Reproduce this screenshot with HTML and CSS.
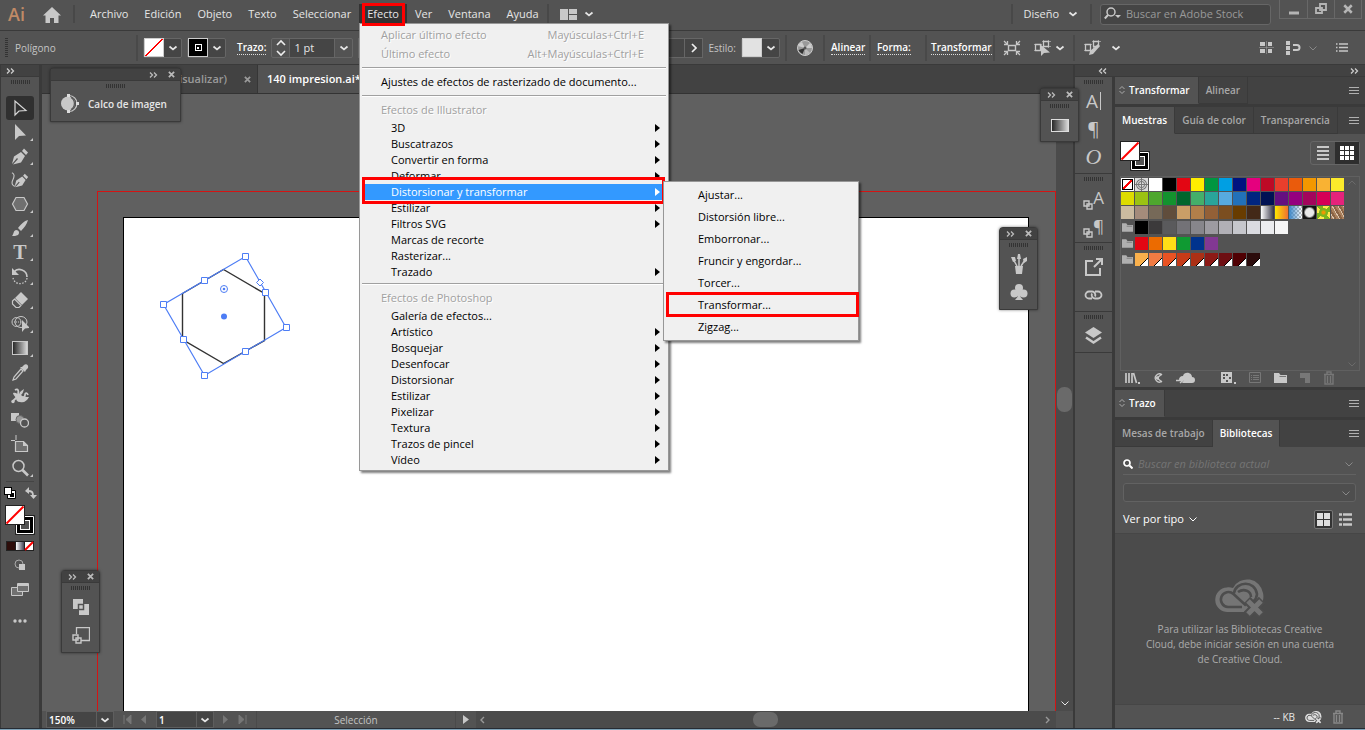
FILE: index.html
```html
<!DOCTYPE html>
<html lang="es">

<head>
  <meta charset="UTF-8" />
  <meta name="viewport" content="width=device-width, initial-scale=1.0" />
  <title>140 impresion.ai</title>
  <link rel="stylesheet" href="styles.css">
</head>

<body>
  <!-- shared icons -->
  <svg class="defs" width="0" height="0" aria-hidden="true">
    <linearGradient id="g-bw"><stop offset="0" stop-color="#222" /><stop offset="1" stop-color="#ddd" /></linearGradient>
    <linearGradient id="g-wb"><stop offset="0" stop-color="#fff" /><stop offset="1" stop-color="#445" /></linearGradient>
    <symbol id="chev" viewBox="0 0 10 10"><path d="M1.500 3.500 5 6.500 8.500 3.500" fill="none" stroke="currentColor" stroke-width="1.700" /></symbol>
    <symbol id="thin" viewBox="0 0 10 10"><path d="M1.500 3.500 5 7 8.500 3.500" fill="none" stroke="currentColor" /></symbol>
    <symbol id="dbl" viewBox="0 0 10 8"><path d="M1 1.500 3.500 4 1 6.500M5 1.500 7.500 4 5 6.500" fill="none" stroke="currentColor" stroke-width="1.300" /></symbol>
    <symbol id="x" viewBox="0 0 8 8"><path d="M1 1 7 7M7 1 1 7" fill="none" stroke="currentColor" stroke-width="2" /></symbol>
    <symbol id="burger" viewBox="0 0 10 9"><path d="M0 1.500h10M0 4.500h10M0 7.500h10" stroke="currentColor" /></symbol>
    <symbol id="updown" viewBox="0 0 6 10"><path d="M.5 4 3 1.500 5.500 4M.5 6 3 8.500 5.500 6" fill="none" stroke="currentColor" /></symbol>
    <symbol id="proxy" viewBox="0 0 30 30">
      <path d="M10.500 10.500h19v19h-19z" fill="#000" stroke="#222" />
      <path d="M11.500 11.500h17v17h-17z" fill="none" stroke="#fff" />
      <rect x="15.500" y="15.500" width="9" height="9" fill="#535353" stroke="#fff" />
      <rect x=".5" y=".5" width="19" height="19" fill="#fff" stroke="#222" />
      <path d="M1.500 18.500 18.500 1.500" stroke="#f00" stroke-width="2" />
    </symbol>
    <symbol id="pen" viewBox="0 0 18 18">
      <path d="M1 17 3 9.500 10 5l4 4-4 6.500-8 2 5-5.500-1-1z" fill="#c8c8c8" /><path d="M11 4 13 1.500l4 4L15 8z" fill="#c8c8c8" />
    </symbol>
    <symbol id="cc" viewBox="0 0 50 40">
      <path d="M13 35A12 12 0 0 1 12 10.500c2-.5 4 0 6 .5A16 16 0 0 1 48 16c1 4 0 8-1 11L33 35z" fill="currentColor" />
      <path d="M27 30H13A7.500 7.500 0 1 1 18.500 17L31 28.500M19 16C21 4 40 3 42 17c0 4-2 6-4 8M23 15c6-4 13-1 13 5" fill="none" stroke="#4d4d4d" stroke-width="2.600" />
      <path d="M32 23 47 38M47 23 32 38" stroke="#4d4d4d" stroke-width="9" />
      <path d="M33 24 46 37M46 24 33 37" stroke="currentColor" stroke-width="5" />
    </symbol>
    <symbol id="trash" viewBox="0 0 12 14"><path d="M1 3.500h10M4 3V1h4v2M2 4v9h8V4M4.500 5v7M7.500 5v7" fill="none" stroke="currentColor" stroke-width="1.400" /></symbol>
    <symbol id="folder" viewBox="0 0 13 10"><path d="M0 0h5l1.500 2H13v8H0z" fill="currentColor" /><path d="M5.500 3.500H12" stroke="#777" /></symbol>
  </svg>

  <header class="menubar">
    <span class="logo">Ai</span>
    <button class="home" aria-label="Inicio"><svg width="18" height="16" viewBox="0 0 18 16"><path d="M9 0 18 8.500H15.500V16H11V11H7v5H2.500V8.500H0z" fill="#c8c8c8" /></svg></button>
    <nav class="menus">
      <button>Archivo</button>
      <button>Edición</button>
      <button>Objeto</button>
      <button>Texto</button>
      <button>Seleccionar</button>
      <button class="open marked">Efecto</button>
      <button>Ver</button>
      <button>Ventana</button>
      <button>Ayuda</button>
    </nav>
    <button class="arrange" aria-label="Organizar documentos">
      <svg width="17" height="11" viewBox="0 0 17 11"><path d="M0 0h8v11H0zM9 0h8v5H9zM9 6h8v5H9z" fill="#c8c8c8" /></svg>
      <svg width="10" height="10"><use href="#chev" /></svg>
    </button>
    <button class="workspace">Diseño <svg width="10" height="10"><use href="#chev" /></svg></button>
    <label class="stock">
      <svg width="18" height="14" viewBox="0 0 18 14"><circle cx="7" cy="5" r="4" fill="none" stroke="#c8c8c8" stroke-width="1.500" /><path d="M4 8 .8 11.500" stroke="#c8c8c8" stroke-width="2" /><path d="M11 8h6l-3 3z" fill="#c8c8c8" /></svg>
      <input type="text" placeholder="Buscar en Adobe Stock" aria-label="Buscar en Adobe Stock">
    </label>
    <div class="window-btns">
      <button aria-label="Minimizar"><svg width="12" height="12"><path d="M1 10h10" stroke="#b5b5b5" stroke-width="3" /></svg></button>
      <button aria-label="Restaurar"><svg width="12" height="12"><path d="M5 1h6v6H5zM1 5h6v5H1z" fill="none" stroke="#b5b5b5" stroke-width="1.800" /></svg></button>
      <button aria-label="Cerrar"><svg width="10" height="10" color="#b5b5b5"><use href="#x" /></svg></button>
    </div>
  </header>

  <section class="control">
    <div class="seg seg-name"><i class="grip-v"></i><span>Polígono</span></div>
    <div class="seg seg-main">
      <button class="combo" aria-label="Relleno"><span class="chip none"></span><svg width="10" height="10"><use href="#chev" /></svg></button>
      <button class="combo" aria-label="Trazo"><span class="chip stroke"></span><svg width="10" height="10"><use href="#chev" /></svg></button>
      <label class="link" for="weight">Trazo:</label>
      <span class="stepper">
        <button aria-label="Cambiar grosor"><svg width="10" height="18" viewBox="0 0 10 18"><path d="M1 6 5 2l4 4M1 12l4 4 4-4" fill="none" stroke="#eee" stroke-width="1.600" /></svg></button>
        <input id="weight" type="text" value="1 pt">
        <button aria-label="Grosores"><svg width="10" height="10"><use href="#chev" /></svg></button>
      </span>
      <span class="profile"><button aria-label="Opacidad"><svg width="6" height="10"><path d="M1 1 5 5 1 9" fill="none" stroke="#eee" stroke-width="1.700" /></svg></button></span>
      <span class="dim">Estilo:</span>
      <button class="combo" aria-label="Estilo"><span class="chip plain"></span><svg width="10" height="10"><use href="#chev" /></svg></button>
    </div>
    <div class="seg seg-wheel">
      <svg width="16" height="16" viewBox="0 0 16 16"><circle cx="8" cy="8" r="7.500" fill="#9a9a9a" stroke="#ccc" /><path d="M8 8 1 6a7 7 0 0 1 4-4zM8 8l5-5a7 7 0 0 1 2 5z" fill="#ccc" /><path d="M8 8 1.500 10a7 7 0 0 0 4 4z" fill="#333" /><path d="M8 8 8 15a7 7 0 0 0 5-2z" fill="#bbb" /><circle cx="8" cy="8" r="1.500" fill="#555" /></svg>
    </div>
    <div class="seg seg-align"><a class="link" href="#">Alinear</a></div>
    <div class="seg seg-shape"><a class="link" href="#">Forma:</a></div>
    <div class="seg seg-transf"><a class="link" href="#">Transformar</a></div>
    <div class="seg seg-icons">
      <svg width="18" height="16" viewBox="0 0 18 16"><path d="M5.500 5.500h7v5h-7z" fill="none" stroke="#c8c8c8" stroke-width="1.400" /><path d="M1 1 4 4M17 1 14 4M1 15 4 12M17 15 14 12" stroke="#c8c8c8" stroke-width="1.300" /><path d="M4.500 1v3.500H1M13.500 1v3.500H17M4.500 15v-3.500H1M13.500 15v-3.500H17" fill="none" stroke="#c8c8c8" stroke-width="1.300" /></svg>
      <span class="pair">
        <svg width="17" height="16" viewBox="0 0 17 16"><path d="M1.500 4.500h5v6h-5zM9.500 1.500h5v5h-5z" fill="none" stroke="#c8c8c8" stroke-width="1.300" /><path d="M0 4.500h8M0 10.500h7M8 1.500h9M8 6.500h9M9.500 0v8M14.500 0v8" stroke="#c8c8c8" stroke-width=".6" /><path d="M7 5v11l3-3 6-.5z" fill="#c8c8c8" /></svg>
        <svg width="10" height="10"><use href="#chev" /></svg>
      </span>
    </div>
    <div class="seg seg-edit">
      <svg width="17" height="16" viewBox="0 0 17 16"><path d="M1.500 4.500h5v6h-5zM9.500 1.500h5v5h-5z" fill="none" stroke="#c8c8c8" stroke-width="1.300" /><path d="M0 4.500h8M0 10.500h7M8 1.500h9M9.500 0v8M14.500 0v4" stroke="#c8c8c8" stroke-width=".6" /><path d="m5 15 1-4 8-7 2 2-7 8z" fill="#c8c8c8" /></svg>
      <svg width="10" height="10"><use href="#chev" /></svg>
    </div>
    <div class="control-end">
      <svg width="15" height="13" viewBox="0 0 15 13"><path d="M1 1h5v4H1zM9 1h4v4H9zM1 8h5v4H1zM9 8h4v4H9z" fill="#c8c8c8" /><path d="M0 6.500h15M7.500 0v13" stroke="#999" stroke-width=".6" /></svg>
      <span class="pair">
        <svg width="15" height="14" viewBox="0 0 15 14"><path d="M0 0h4v4H0zM0 5h4v4H0zM0 10h4v4H0z" fill="#c8c8c8" /><path d="M7 4h4a2.500 2.500 0 0 1 0 5H7" fill="none" stroke="#c8c8c8" stroke-width="2" /></svg>
        <svg class="faint" width="10" height="10"><use href="#thin" /></svg>
      </span>
      <svg width="12" height="9" viewBox="0 0 12 9"><path d="M3 1h9M3 4.500h9M3 8h9M0 1h1.500M0 4.500h1.500M0 8h1.500" stroke="#c8c8c8" stroke-width="1.300" /></svg>
    </div>
  </section>

  <main>
    <aside class="tools">
      <div class="dock-head"><svg width="10" height="8"><use href="#dbl" /></svg></div>
      <i class="grip"></i>
      <ul class="tool-list">
        <li class="active"><svg viewBox="0 0 18 18"><path d="M4 2v14l4-4 7-.5z" fill="none" stroke="#d8d8d8" stroke-width="1.200" /></svg></li>
        <li class="more"><svg viewBox="0 0 18 18"><path d="M4 1v16l4-4 7-.5z" fill="#c8c8c8" /></svg></li>
        <li class="more"><svg viewBox="0 0 18 18"><use href="#pen" /></svg></li>
        <li><svg viewBox="0 0 20 18"><use href="#pen" x="3" width="17" height="18" /><path d="M1 1c3 1 3 4 1 8s0 7 3 7" fill="none" stroke="#c8c8c8" stroke-width="1.200" /></svg></li>
        <li class="more"><svg viewBox="0 0 18 18"><path d="M1.500 9 5 2.500h8L16.500 9 13 15.500H5z" fill="#707070" stroke="#c8c8c8" stroke-width="1.200" /></svg></li>
        <li class="more"><svg viewBox="0 0 18 18"><path d="M1 17c2-2 1-5 4-6 3 0 4 3 2 5-2 1-4 1-6 1zM7 9c3-4 6-7 10-8-1 4-4 8-7 11z" fill="#c8c8c8" /></svg></li>
        <li class="more"><span class="type">T</span></li>
        <li class="more"><svg viewBox="0 0 18 18"><path d="M3 5c4-5 13-2 13 5" fill="none" stroke="#c8c8c8" stroke-width="1.700" /><path d="M1 1v7h7z" fill="#c8c8c8" /><path d="M16 11c-1 7-12 8-14 0" fill="none" stroke="#c8c8c8" stroke-width="1.300" stroke-dasharray="1.500 1.500" /></svg></li>
        <li class="more"><svg viewBox="0 0 18 18"><path d="M10 1 17 8 11 14 4 7z" fill="#c8c8c8" /><path d="M3.500 8 10 14.500 8 16.500H5L1.500 13v-3z" fill="none" stroke="#c8c8c8" stroke-width="1.200" /></svg></li>
        <li class="more"><svg viewBox="0 0 18 18"><circle cx="5.500" cy="7" r="4.500" fill="none" stroke="#c8c8c8" /><ellipse cx="10" cy="7" rx="6" ry="5.500" fill="none" stroke="#c8c8c8" /><path d="M3 7h8" stroke="#c8c8c8" stroke-dasharray="1 1" /><path d="M11 5v12l3-3.500 5-.5z" fill="#c8c8c8" /></svg></li>
        <li class="more"><svg viewBox="0 0 18 18"><rect x="1.500" y="2.500" width="15" height="13" fill="url(#g-bw)" stroke="#c8c8c8" /></svg></li>
        <li><svg viewBox="0 0 18 18"><path d="m10 6 2 2-7 8-3 1 1-3z" fill="none" stroke="#c8c8c8" stroke-width="1.200" /><path d="M9 4 14 9l1-2 2-2c1-3-2-5-4-3l-2 2z" fill="#c8c8c8" /></svg></li>
        <li><svg viewBox="0 0 18 18"><path d="M1.500 14.500 6 10M4 3c3-2 4 1 3 4M17 8c-1-3-3-2-3 0s-2 3-3 2" fill="none" stroke="#c8c8c8" stroke-width="1.800" /><path d="M2 6c3-1 4 1 6 1 1-3 4-4 5-5-1 3-1 4-3 6 2 2 5 2 8 2-2 4-5 6-9 5-3 0-4-2-4-4-1-2-3-3-3-5z" fill="#c8c8c8" /><circle cx="2" cy="14.500" r="1.700" fill="#c8c8c8" /></svg></li>
        <li><svg viewBox="0 0 18 18"><path d="M0 2h8v8H0z" fill="#c8c8c8" /><circle cx="9" cy="8.500" r="4" fill="#999" stroke="#666" /><circle cx="13.500" cy="12" r="4" fill="#535353" stroke="#c8c8c8" stroke-width="1.300" /></svg></li>
        <li><svg viewBox="0 0 18 18"><path d="M4.500 6.500h8l4 4v6h-12z" fill="#707070" stroke="#c8c8c8" stroke-width="1.200" /><path d="M5 0v5M0 5.500h4" stroke="#c8c8c8" /><path d="M12 6v5h5z" fill="#c8c8c8" /></svg></li>
        <li class="more"><svg viewBox="0 0 18 18"><circle cx="7.500" cy="7" r="5.500" fill="none" stroke="#c8c8c8" stroke-width="1.500" /><path d="m11.500 11 5.500 5.500" stroke="#c8c8c8" stroke-width="2.600" /></svg></li>
      </ul>
      <div class="swap">
        <svg width="12" height="12" viewBox="0 0 12 12"><path d="M3.500 3.500h8v8h-8z" fill="#fff" stroke="#000" /><path d="M6 6h4v4H6z" fill="#000" /><rect x=".5" y=".5" width="7" height="7" fill="#fff" stroke="#000" /></svg>
        <svg width="12" height="12" viewBox="0 0 12 12"><path d="M3 4c4 0 5 1 5 5" fill="none" stroke="#c8c8c8" stroke-width="1.800" /><path d="M0 4 4 0v7zM5 8h7l-3.500 4z" fill="#c8c8c8" /></svg>
      </div>
      <svg class="fillstroke" width="30" height="30"><use href="#proxy" /></svg>
      <svg class="modes" width="28" height="10" viewBox="0 0 28 10"><path d="M0 0h28v10H0z" fill="#222" /><path d="M1 1h8v8H1z" fill="#2d0d0a" /><path d="M10 1h8v8h-8z" fill="url(#g-wb)" /><path d="M19 1h8v8h-8z" fill="#fff" /><path d="m19 9 8-8" stroke="#f00" stroke-width="2" /></svg>
      <svg class="drawmode" width="12" height="12" viewBox="0 0 12 12"><circle cx="5" cy="5" r="4" fill="none" stroke="#aaa" /><path d="M5 5h6v6H5z" fill="#c8c8c8" /></svg>
      <svg class="screenmode" width="18" height="13" viewBox="0 0 18 13"><path d="M.5 4.500h11v8H.5z" fill="#707070" stroke="#c8c8c8" /><path d="M6.500.5h11v8h-11z" fill="#707070" stroke="#c8c8c8" /><path d="M6 1h12v2H6z" fill="#c8c8c8" /></svg>
      <svg class="dots" width="14" height="4" fill="#c8c8c8"><circle cx="2" cy="2" r="1.700" /><circle cx="7" cy="2" r="1.700" /><circle cx="12" cy="2" r="1.700" /></svg>
    </aside>

    <section class="doc">
      <div class="tabs">
        <div class="tab tab-back"><span>Previsualizar)</span><svg width="7" height="7"><use href="#x" width="7" height="7" /></svg></div>
        <div class="tab active">140 impresion.ai*</div>
      </div>
      <div class="workarea">
        <div class="canvas">
          <div class="bleed"></div>
          <div class="artboard">
            <svg class="shape" width="130" height="126" viewBox="0 0 130 126">
              <path d="M22.500 37.500 63.500 13.500 104.500 37.500V84.500L63.500 107.500 22.500 83.500z" fill="#fff" stroke="#333" stroke-width="1.400" />
              <path d="M85.500.5 126 71.500 44.500 119.500 3.500 48.500z" fill="none" stroke="#4d7df5" stroke-width="1.200" />
              <g fill="#fff" stroke="#4d7df5"><path d="M82.500-2.500h6v6h-6zM123.500 68.500h6v6h-6zM41.500 116.500h6v6h-6zM.5 45.500h6v6h-6zM41.500 21.500h6v6h-6zM102.500 33.500h6v6h-6zM82.500 92.500h6v6h-6zM20.500 80.500h6v6h-6z" /><circle cx="64" cy="33" r="3.500" /><path d="m100 23 3.500 3.500-3.500 3.500-3.500-3.500z" /></g>
              <circle cx="64" cy="33" r="1.300" fill="#4d7df5" /><circle cx="64" cy="60.500" r="3" fill="#4d7df5" />
            </svg>
          </div>
        </div>
        <div class="vscroll"><i></i><svg width="10" height="10"><use href="#thin" /></svg></div>
      </div>
      <footer class="status">
        <span class="zoombox"><input type="text" value="150%" aria-label="Zoom"><button aria-label="Niveles de zoom"><svg width="10" height="10"><use href="#chev" /></svg></button></span>
        <span class="nav"><svg width="9" height="9"><path d="M1 0v9M8 0v9L3 4.500z" fill="#777" stroke="#777" /></svg><svg width="6" height="9"><path d="M5 0v9L0 4.500z" fill="#777" /></svg></span>
        <span class="zoombox page"><input type="text" value="1" aria-label="Mesa de trabajo"><button aria-label="Mesas"><svg width="10" height="10"><use href="#chev" /></svg></button></span>
        <span class="nav"><svg width="6" height="9"><path d="M0 0v9L5 4.500z" fill="#777" /></svg><svg width="9" height="9"><path d="M8 0v9M1 0v9l5-4.500z" fill="#777" stroke="#777" /></svg></span>
        <span class="mode">Selección</span>
        <svg class="play" width="6" height="9"><path d="M0 0v9L6 4.500z" fill="#c8c8c8" /></svg>
        <div class="hscroll"><svg width="5" height="8"><path d="M4 1 1 4l3 3" fill="none" stroke="#999" stroke-width="1.400" /></svg><i></i><svg width="5" height="8"><path d="M1 1 4 4 1 7" fill="none" stroke="#999" stroke-width="1.400" /></svg></div>
      </footer>
    </section>

    <div class="dock">
      <div class="dock-head wide"><svg class="flip" width="10" height="8"><use href="#dbl" /></svg><svg width="10" height="8"><use href="#dbl" /></svg></div>
      <div class="dock-cols">
        <aside class="icons">
          <div class="group"><i class="grip"></i><span class="cell glyph">A<i class="caret"></i></span><span class="cell glyph">¶</span><span class="cell glyph oh">O</span></div>
          <div class="group"><i class="grip"></i>
            <span class="cell glyph style"><svg width="10" height="10"><path d="M1 1h5v5H1zM4 4h5v5H4z" fill="none" stroke="#c8c8c8" stroke-width="1.400" /></svg>A</span>
            <span class="cell glyph style"><svg width="10" height="10"><path d="M1 1h5v5H1zM4 4h5v5H4z" fill="none" stroke="#c8c8c8" stroke-width="1.400" /></svg>¶</span>
          </div>
          <div class="group"><i class="grip"></i>
            <span class="cell"><svg width="18" height="18" viewBox="0 0 18 18"><path d="M8 3H1v14h14v-7" fill="none" stroke="#c8c8c8" stroke-width="2" /><path d="M9 9 16 2M11 1h6v6" fill="none" stroke="#c8c8c8" stroke-width="2" /></svg></span>
            <span class="cell"><svg width="19" height="10" viewBox="0 0 19 10"><path d="M8 8.500H5a3.500 3.500 0 0 1 0-7h3a3.500 3.500 0 0 1 3 5M11 1.500h3a3.500 3.500 0 0 1 0 7h-3a3.500 3.500 0 0 1-3-5" fill="none" stroke="#c8c8c8" stroke-width="1.800" /></svg></span>
          </div>
          <div class="group"><i class="grip"></i><span class="cell"><svg width="17" height="18" viewBox="0 0 17 18"><path d="M8.500 0 17 5.500 8.500 11 0 5.500z" fill="#c8c8c8" /><path d="m1 10.500 7.500 5 7.500-5" fill="none" stroke="#c8c8c8" stroke-width="2.500" /></svg></span></div>
        </aside>

        <aside class="panels">
          <section class="panel">
            <div class="ptabs">
              <button class="active"><svg width="6" height="10"><use href="#updown" /></svg>Transformar</button><button>Alinear</button>
              <svg class="menu-ico" width="10" height="9"><use href="#burger" /></svg>
            </div>
          </section>
          <section class="panel">
            <div class="ptabs tight">
              <button class="active">Muestras</button><button>Guía de color</button><button>Transparencia</button>
              <svg class="menu-ico" width="10" height="9"><use href="#burger" /></svg>
            </div>
            <div class="swatches-body">
              <div class="swatches-top">
                <svg width="30" height="30"><use href="#proxy" /></svg>
                <span class="toggle">
                  <button aria-label="Lista"><svg width="12" height="14"><path d="M0 1h12M0 5h12M0 9h12M0 13h12" stroke="#c8c8c8" stroke-width="2" /></svg></button>
                  <button class="on" aria-label="Miniaturas"><svg width="14" height="14" fill="#fff"><path d="M0 0h4v4H0zM5 0h4v4H5zM10 0h4v4h-4zM0 5h4v4H0zM5 5h4v4H5zM10 5h4v4h-4zM0 10h4v4H0zM5 10h4v4H5zM10 10h4v4h-4z" /></svg></button>
                </span>
              </div>
              <div class="swatches-box">
                <div id="swatches"></div>
                <div class="swatches-scroll"><svg class="up" width="10" height="10"><use href="#thin" /></svg><svg width="10" height="10"><use href="#thin" /></svg></div>
              </div>
              <div class="swatches-tools">
                <svg width="15" height="12" viewBox="0 0 15 12"><path d="M1 1v10M4 1v10M7 1v10M8.500 1l3 10" stroke="#c8c8c8" stroke-width="1.700" /><path d="M13 10h2v2h-2z" fill="#c8c8c8" /></svg>
                <svg width="10" height="12" viewBox="0 0 10 12"><path d="M9 3A4 4 0 1 0 9 9M4 6l5-4M4 6l5 4" fill="none" stroke="#c8c8c8" stroke-width="1.300" /><circle cx="4.500" cy="6" r="1.700" fill="#c8c8c8" /></svg>
                <svg width="19" height="12" viewBox="0 0 19 12"><path d="M6 11h10a3 3 0 0 0 0-6c0-5-8-6-9-1-3 0-4 2-4 4h5z" fill="#c8c8c8" /><path d="M0 8.500h6M4 6l3 2.500L4 11" fill="none" stroke="#c8c8c8" stroke-width="1.500" /></svg>
                <svg class="gap" width="15" height="12" viewBox="0 0 15 12"><path d="M0 0h11v11H0z" fill="#c8c8c8" /><path d="M2 2h2v2H2zM5 2h2v2H5zM2 5h2v2H2zM8 5h2v2H8zM5 8h2v2H5z" fill="#535353" /><path d="M13 10h2v2h-2z" fill="#c8c8c8" /></svg>
                <svg width="12" height="12" viewBox="0 0 12 12"><path d="M.5.5h11v10H.5zM2 3.500h1M4 3.500h6M2 5.500h1M4 5.500h6M2 7.500h1M4 7.500h6" fill="none" stroke="#777" /></svg>
                <svg width="13" height="10" color="#c8c8c8"><use href="#folder" /></svg>
                <svg width="10" height="10"><path d="M0 0h10v10H5V5H0z" fill="#777" /></svg>
                <svg width="12" height="14" color="#777"><use href="#trash" /></svg>
              </div>
            </div>
          </section>
          <section class="panel">
            <div class="ptabs">
              <button class="active"><svg width="6" height="10"><use href="#updown" /></svg>Trazo</button>
              <svg class="menu-ico" width="10" height="9"><use href="#burger" /></svg>
            </div>
          </section>
          <section class="panel grow">
            <div class="ptabs tight">
              <button>Mesas de trabajo</button><button class="active">Bibliotecas</button>
              <svg class="menu-ico" width="10" height="9"><use href="#burger" /></svg>
            </div>
            <div class="lib-top">
              <label class="lib-search">
                <svg width="10" height="10"><circle cx="4" cy="4" r="3" fill="none" stroke="#fff" stroke-width="1.700" /><path d="m6.500 6.500 3 3" stroke="#fff" stroke-width="2" /></svg>
                <input type="text" placeholder="Buscar en biblioteca actual" aria-label="Buscar en biblioteca actual">
                <svg class="faint" width="10" height="10"><use href="#thin" /></svg>
              </label>
              <div class="lib-select"><select aria-label="Biblioteca"><option></option></select><svg class="faint" width="10" height="10"><use href="#thin" /></svg></div>
              <div class="lib-view">
                <button class="by-type">Ver por tipo <svg width="10" height="10"><use href="#thin" /></svg></button>
                <button class="grid-btn" aria-label="Cuadrícula"><svg width="13" height="13" fill="#ddd"><path d="M0 0h6v6H0zM7 0h6v6H7zM0 7h6v6H0zM7 7h6v6H7z" /></svg></button>
                <button aria-label="Lista"><svg width="13" height="13"><path d="M0 1.500h3M4 1.500h9M0 6.500h3M4 6.500h9M0 11.500h3M4 11.500h9" stroke="#c8c8c8" stroke-width="2.500" /></svg></button>
              </div>
            </div>
            <div class="lib-empty">
              <svg width="50" height="40"><use href="#cc" /></svg>
              <p>Para utilizar las Bibliotecas Creative<br>Cloud, debe iniciar sesión en una cuenta<br>de Creative Cloud.</p>
            </div>
            <div class="lib-foot"><span>-- KB</span><svg width="17" height="14" color="#ddd"><use href="#cc" /></svg><svg width="12" height="14" color="#888"><use href="#trash" /></svg></div>
          </section>
        </aside>
      </div>
    </div>
  </main>
  <div class="taskbar"></div>

  <!-- floating panels -->
  <div class="float float-trace">
    <div class="float-head"><svg width="10" height="8"><use href="#dbl" /></svg><svg width="7" height="7"><use href="#x" width="7" height="7" /></svg></div>
    <i class="grip"></i>
    <div class="trace"><svg width="19" height="19" viewBox="0 0 19 19"><circle cx="8" cy="9.500" r="7" fill="#c8c8c8" /><path d="M9 1.500a8 8 0 0 1 0 16" fill="none" stroke="#c8c8c8" stroke-width="1.200" /><path d="M11 3.500a7 7 0 0 1 0 12" fill="none" stroke="#535353" stroke-width="1.200" /><path d="M7 0h3v3H7zM7 16h3v3H7zM16 8h3v3h-3z" fill="#ddd" /></svg><b>Calco de imagen</b></div>
  </div>
  <div class="float float-gradient">
    <div class="float-head"><svg width="10" height="8"><use href="#dbl" /></svg><svg width="7" height="7"><use href="#x" width="7" height="7" /></svg></div>
    <i class="grip"></i>
    <span class="cell"><svg width="18" height="13"><rect x=".5" y=".5" width="17" height="12" fill="url(#g-bw)" stroke="#ddd" /></svg></span>
  </div>
  <div class="float float-brush">
    <div class="float-head"><svg width="10" height="8"><use href="#dbl" /></svg><svg width="7" height="7"><use href="#x" width="7" height="7" /></svg></div>
    <i class="grip"></i>
    <span class="cell"><svg width="18" height="20" viewBox="0 0 18 20"><path d="M5 12h8l-1 8H6z" fill="#c8c8c8" /><path d="M7 12 3 5M9 12V5M11 12l4-6" stroke="#c8c8c8" stroke-width="1.500" /><path d="M1 3h4l1 4-3 1zM8 0h2l1 5H7zM13 5l4-2v4l-3 2z" fill="#c8c8c8" /></svg></span>
    <span class="cell"><svg width="18" height="18" viewBox="0 0 18 18" fill="#c8c8c8"><circle cx="9" cy="5" r="4" /><circle cx="4.500" cy="10.500" r="4" /><circle cx="13.500" cy="10.500" r="4" /><path d="M8 8h2l.5 6 2.500 3H5l2.500-3z" /></svg></span>
  </div>
  <div class="float float-path">
    <div class="float-head"><svg width="10" height="8"><use href="#dbl" /></svg><svg width="7" height="7"><use href="#x" width="7" height="7" /></svg></div>
    <i class="grip"></i>
    <span class="cell"><svg width="16" height="16" viewBox="0 0 16 16"><path d="M0 0h10v5h6v11H6v-6H0z" fill="#c8c8c8" /><path d="M5.500 5.500h5v5h-5z" fill="#c8c8c8" stroke="#535353" stroke-width="1.500" /></svg></span>
    <span class="cell"><svg width="18" height="17" viewBox="0 0 18 17"><path d="M4.500 7V.5h13v13H9" fill="none" stroke="#c8c8c8" stroke-width="1.300" /><path d="M1 8h5v5H1zM4 11h5v5H4z" fill="none" stroke="#c8c8c8" stroke-width="1.400" /></svg></span>
  </div>

  <!-- Efecto menu -->
  <ul class="dropdown effects">
    <li class="top off"><span>Aplicar último efecto</span><span>Mayúsculas+Ctrl+E</span></li>
    <li class="top off"><span>Último efecto</span><span>Alt+Mayúsculas+Ctrl+E</span></li>
    <li class="rule"></li>
    <li class="head">Ajustes de efectos de rasterizado de documento...</li>
    <li class="rule"></li>
    <li class="head off">Efectos de Illustrator</li>
    <li class="sub">3D</li>
    <li class="sub">Buscatrazos</li>
    <li class="sub">Convertir en forma</li>
    <li class="sub">Deformar</li>
    <li class="sub hot">Distorsionar y transformar</li>
    <li class="sub">Estilizar</li>
    <li class="sub">Filtros SVG</li>
    <li>Marcas de recorte</li>
    <li>Rasterizar...</li>
    <li class="sub">Trazado</li>
    <li class="rule"></li>
    <li class="head off">Efectos de Photoshop</li>
    <li>Galería de efectos...</li>
    <li class="sub">Artístico</li>
    <li class="sub">Bosquejar</li>
    <li class="sub">Desenfocar</li>
    <li class="sub">Distorsionar</li>
    <li class="sub">Estilizar</li>
    <li class="sub">Pixelizar</li>
    <li class="sub">Textura</li>
    <li class="sub">Trazos de pincel</li>
    <li class="sub">Vídeo</li>
  </ul>
  <ul class="dropdown distort">
    <li>Ajustar...</li>
    <li>Distorsión libre...</li>
    <li>Emborronar...</li>
    <li>Fruncir y engordar...</li>
    <li>Torcer...</li>
    <li class="marked">Transformar...</li>
    <li>Zigzag...</li>
  </ul>

  <script>
    const folder = '<svg class="folder" width="11" height="9"><use href="#folder" /></svg>'
    const rows = [
      ['none', 'reg', '#fff', '#000', '#e30613', '#ffed00', '#009640', '#009fe3', '#00137f', '#e5007e', '#be0a26', '#e83f2c', '#ea5b0c', '#f39800', '#f9b233', '#fcea2b'],
      ['#dedc00', '#9bc213', '#4ea72e', '#13922e', '#00662d', '#44af6a', '#2aa49a', '#57aae0', '#2271b9', '#002580', '#001254', '#650f80', '#95007f', '#a3055c', '#d60056', '#e5237b'],
      ['#cbbba0', '#a48b7b', '#766958', '#604d3c', '#ca9e67', '#b17f4a', '#936037', '#7b4e20', '#683c00', '#432918', 'fade', 'sun', 'sky', 'ring', 'leaf', 'noise'],
      ['folder', '#000', '#3c3a3b', '#5a5a5c', '#737277', '#87868b', '#9d9ba1', '#b1b0b6', '#c6c7cc', '#dadbe0', '#ebecee', '#f6f6f6'],
      ['folder', '#e30613', '#ec6b00', '#ffde17', '#0f9a32', '#00338d', '#823893'],
      ['folder', '#f9b04c', '#f07b43', '#e95323', '#c63b18', '#ab3015', '#8c1a16', '#6d0e12', '#500003', '#2b0b0b']
    ]
    const box = document.getElementById('swatches')
    rows.forEach((row, r) => {
      const line = document.createElement('div')
      line.className = 'swatch-row' + (r > 2 ? ' set' : '')
      row.forEach((c) => {
        if (c === 'folder') {
          line.innerHTML += folder
          return
        }
        const sw = document.createElement('span')
        sw.className = 'sw' + (c[0] === '#' ? '' : ' sw-' + c) + (r === 5 ? ' spot' : '')
        if (c[0] === '#') sw.style.backgroundColor = c
        line.appendChild(sw)
      })
      box.appendChild(line)
    })
  </script>
</body>

</html>
```

FILE: styles.css
```css
* {
  box-sizing: border-box;
  margin: 0;
  padding: 0;
}

body {
  position: relative;
  display: flex;
  flex-direction: column;
  height: 100vh;
  overflow: hidden;
  background: #535353;
  color: #e6e6e6;
  font: 11px/16px "Open Sans", "Noto Sans", sans-serif;
}

button,
input,
select {
  font: inherit;
  color: inherit;
  background: none;
  border: 0;
  border-radius: 0;
  outline: 0;
}

ul {
  list-style: none;
}

svg {
  display: block;
  flex: none;
}

.defs {
  position: absolute;
}

/* menu bar */
.menubar {
  display: flex;
  align-items: center;
  height: 30px;
  padding-left: 8px;
  padding-bottom: 2px;
  flex: none;
}

.logo {
  width: 35px;
  color: #c08a66;
  font-size: 18px;
  font-weight: 600;
}

.home {
  padding-right: 12px;
  margin-right: 7px;
  padding-top: 2px;
  border-right: 2px solid #484848;
}

.menus {
  display: flex;
}

.menus button {
  height: 20px;
  padding: 0 8px;
}

.menus .open {
  position: relative;
  background: #333;
}

.marked::after {
  content: "";
  position: absolute;
  z-index: 9;
  border: 3px solid #f00;
}

.open.marked::after {
  inset: -1px 2px -2px 3px;
}

.arrange {
  display: flex;
  align-items: center;
  gap: 7px;
  padding-left: 11px;
  height: 20px;
  border-left: 2px solid #484848;
}

.workspace {
  display: flex;
  align-items: center;
  gap: 9px;
  height: 20px;
  margin-left: auto;
  padding: 0 12px 0 10px;
  border: solid #484848;
  border-width: 0 2px;
}

.stock {
  display: flex;
  align-items: center;
  gap: 4px;
  width: 171px;
  height: 21px;
  margin-left: 8px;
  padding-left: 3px;
  background: #454545;
  border: 1px solid #666;
  border-radius: 3px;
}

.stock input {
  flex: 1;
  min-width: 0;
}

.stock input::placeholder {
  color: #999;
}

.window-btns {
  display: flex;
  align-self: flex-start;
  margin: 0 3px 0 8px;
  border: 1px solid #686868;
  border-top: 0;
}

.window-btns button {
  display: flex;
  align-items: center;
  justify-content: center;
  width: 27px;
  height: 18px;
}

.window-btns button + button {
  border-left: 1px solid #686868;
}

/* control bar */
.control {
  display: flex;
  align-items: center;
  height: 35px;
  flex: none;
  border: solid #3a3a3a;
  border-width: 1px 0;
  font-size: 10px;
}

.seg {
  display: flex;
  align-items: center;
  height: 26px;
  flex: none;
  border-right: 2px solid #494949;
}

.seg-name {
  width: 138px;
  gap: 7px;
  padding-left: 5px;
  color: #c4c4c4;
}

.grip-v {
  width: 3px;
  height: 20px;
  background: repeating-linear-gradient(#333 0 1px, transparent 1px 2px);
}

.seg-main {
  width: 649px;
  gap: 5px;
  padding: 0 5px;
}

.combo {
  display: flex;
  align-items: center;
  gap: 4px;
  padding-right: 3px;
  height: 20px;
  border: 1px solid #666;
  border-radius: 2px;
  background: #454545;
}

.chip {
  width: 20px;
  height: 19px;
  border: 1px solid #ccc;
}

.none {
  background: linear-gradient(135deg, #fff 47%, #f00 47% 53%, #fff 53%);
}

.stroke {
  background: linear-gradient(#fff, #fff) center / 2px 2px no-repeat, linear-gradient(#000, #000) center / 5px 5px no-repeat, linear-gradient(#fff, #fff) center / 7px 7px no-repeat, #000;
}

.plain {
  background: #e2e2e2;
}

.link {
  color: #fff;
  font-weight: 600;
  text-decoration: none;
  line-height: 14px;
  border-bottom: 1px dotted #ddd;
}

.seg-main .link {
  margin-left: 6px;
}

.stepper {
  display: flex;
  height: 20px;
  border: 1px solid #666;
  border-radius: 2px;
}

.stepper button {
  display: flex;
  width: 17px;
  align-items: center;
  justify-content: center;
}

.stepper input {
  width: 46px;
  padding-left: 4px;
  background: #454545;
  border: solid #666;
  border-width: 0 1px;
  font-size: 11px;
}

.profile {
  display: flex;
  flex: 1;
  justify-content: flex-end;
  height: 20px;
  background: #454545;
  border: 1px solid #666;
}

.profile button {
  width: 18px;
  padding-left: 6px;
  border-left: 1px solid #666;
}

.dim {
  color: #c4c4c4;
}

.seg-wheel {
  width: 38px;
  justify-content: center;
}

.seg-align {
  width: 46px;
  padding-left: 6px;
}

.seg-shape {
  width: 56px;
  padding-left: 6px;
}

.seg-transf {
  width: 68px;
  padding-left: 4px;
}

.seg-icons {
  width: 80px;
  gap: 13px;
  padding-left: 8px;
}

.pair {
  display: flex;
  align-items: center;
  gap: 4px;
}

.seg-edit {
  gap: 10px;
  padding-left: 9px;
  border: 0;
}

.control-end {
  display: flex;
  align-items: center;
  gap: 18px;
  margin-left: auto;
  padding-right: 17px;
}

.control-end .pair {
  gap: 7px;
  margin-left: -6px;
}

.faint {
  color: #888;
}

/* tools */
main {
  display: flex;
  flex: 1;
  min-height: 0;
}

.tools {
  display: flex;
  flex-direction: column;
  align-items: center;
  width: 42px;
  flex: none;
  border: solid #3a3a3a;
  border-width: 0 3px 0 1px;
}

.dock-head {
  display: flex;
  align-items: center;
  align-self: stretch;
  height: 12px;
  flex: none;
  padding-left: 5px;
  background: #424242;
  border-bottom: 1px solid #3a3a3a;
  color: #ccc;
}

.grip {
  display: block;
  width: 19px;
  height: 4px;
  flex: none;
  margin: 3px auto;
  background: repeating-linear-gradient(90deg, #333 0 1px, transparent 1px 2px);
}

.tool-list {
  margin-top: 9px;
  padding-bottom: 1px;
  border-bottom: 1px solid #444;
}

.tool-list li {
  position: relative;
  display: flex;
  align-items: center;
  justify-content: center;
  width: 28px;
  height: 24px;
}

.tool-list svg {
  width: 18px;
  height: 18px;
}

.tool-list .active {
  background: #303030;
  border-radius: 3px;
}

.tool-list .more::after {
  content: "";
  position: absolute;
  right: 1px;
  bottom: 3px;
  border: solid transparent;
  border-width: 3px 0 0 3px;
  border-right: 0;
  border-bottom: 3px solid #c8c8c8;
}

.type {
  font: bold 20px/20px "Liberation Serif", serif;
  color: #c8c8c8;
}

.swap {
  display: flex;
  gap: 9px;
  margin-top: 5px;
}

.fillstroke {
  margin-top: 6px;
}

.modes {
  margin-top: 6px;
}

.drawmode {
  margin-top: 8px;
}

.screenmode {
  margin-top: 12px;
}

.dots {
  margin-top: 23px;
}

/* document */
.doc {
  display: flex;
  flex-direction: column;
  flex: 1;
  min-width: 0;
}

.tabs {
  display: flex;
  height: 29px;
  flex: none;
  background: #424242;
  border-bottom: 1px solid #333;
}

.tab {
  display: flex;
  align-items: center;
  padding: 0 9px;
  color: #9a9a9a;
  font-weight: 600;
}

.tab-back {
  width: 216px;
  gap: 17px;
  padding-right: 6px;
  justify-content: flex-end;
  border-right: 1px solid #363636;
}

.tabs .active {
  width: 200px;
  background: #535353;
  color: #fff;
}

.workarea {
  display: flex;
  flex: 1;
  min-height: 0;
}

.canvas {
  position: relative;
  flex: 1;
  overflow: hidden;
  background: #606060;
}

.bleed {
  position: absolute;
  inset: 97px 0 0 55px;
  border: solid #d41414;
  border-width: 1px 1px 0;
}

.artboard {
  position: absolute;
  inset: 123px 27px 0 81px;
  background: #fff;
  border: solid #000;
  border-width: 1px 1px 0;
}

.shape {
  position: absolute;
  left: 36px;
  top: 38px;
  overflow: visible;
}

.vscroll {
  display: flex;
  flex-direction: column;
  align-items: center;
  justify-content: space-between;
  width: 17px;
  padding: 293px 0 3px;
  background: #4b4b4b;
}

.vscroll i {
  width: 15px;
  height: 25px;
  border-radius: 7px;
  background: #6a6a6a;
}

.status {
  display: flex;
  align-items: center;
  height: 17px;
  flex: none;
  padding-left: 4px;
  font-size: 10px;
}

.zoombox {
  display: flex;
  width: 68px;
  height: 17px;
  background: #454545;
  border: 1px solid #5e5e5e;
}

.zoombox input {
  flex: 1;
  min-width: 0;
  padding: 1px 0 0 2px;
  color: #fff;
  font-weight: 600;
}

.zoombox button {
  width: 17px;
  padding-left: 3px;
  border-left: 1px solid #5e5e5e;
}

.page {
  width: 58px;
}

.nav {
  display: flex;
  justify-content: center;
  gap: 9px;
  width: 42px;
}

.mode {
  width: 200px;
  padding-top: 1px;
  text-align: center;
  color: #c4c4c4;
  border: solid #4a4a4a;
  border-width: 0 1px;
}

.play {
  margin: 0 7px;
}

.hscroll {
  display: flex;
  align-items: center;
  justify-content: space-between;
  flex: 1;
  height: 17px;
  margin-right: 17px;
  padding: 0 6px 0 4px;
  background: #4b4b4b;
}

.hscroll i {
  width: 25px;
  height: 15px;
  border-radius: 7px;
  background: #6a6a6a;
}

/* right dock */
.dock {
  display: flex;
  flex-direction: column;
  width: 292px;
  flex: none;
  border-left: 2px solid #3a3a3a;
}

.wide {
  justify-content: space-between;
  padding: 0 5px 0 22px;
}

.flip {
  transform: scaleX(-1);
}

.dock-cols {
  display: flex;
  flex: 1;
  min-height: 0;
}

.icons {
  width: 37px;
  flex: none;
}

.group {
  padding-bottom: 2px;
  border-bottom: 1px solid #3a3a3a;
}

.group .grip {
  margin-bottom: 3px;
}

.cell {
  display: flex;
  align-items: center;
  justify-content: center;
  height: 28px;
}

.glyph {
  color: #c8c8c8;
  font-size: 19px;
}

.caret {
  width: 1px;
  height: 18px;
  margin-left: 2px;
  background: #c8c8c8;
}

.oh {
  font: italic 22px/28px "Liberation Serif", serif;
}

.style {
  font-size: 17px;
}

.style svg {
  align-self: flex-end;
  margin-bottom: 2px;
}

.panels {
  display: flex;
  flex-direction: column;
  flex: 1;
  min-width: 0;
  border-left: 3px solid #3a3a3a;
}

.panel {
  display: flex;
  flex-direction: column;
  border-bottom: 3px solid #3a3a3a;
}

.grow {
  flex: 1;
  border-bottom: 0;
}

.ptabs {
  display: flex;
  height: 27px;
  flex: none;
  background: #424242;
}

.ptabs button {
  display: flex;
  align-items: center;
  gap: 4px;
  padding: 0 8px 0 4px;
  color: #a8a8a8;
  font-size: 10px;
  font-weight: 600;
  border: solid #3a3a3a;
  border-width: 0 1px 1px 0;
}

.ptabs button + button,
.ptabs.tight button {
  padding: 0 7px;
}

.ptabs .active {
  background: #535353;
  color: #fff;
  border-bottom-color: #535353;
}

.ptabs .active svg {
  color: #aaa;
}

.menu-ico {
  margin: auto 6px auto auto;
  color: #b0b0b0;
}

.swatches-body {
  padding: 7px 5px 2px;
}

.swatches-top {
  display: flex;
  justify-content: space-between;
}

.toggle {
  display: flex;
  height: 24px;
  border: 1px solid #666;
  border-radius: 3px;
}

.toggle button {
  display: flex;
  align-items: center;
  justify-content: center;
  width: 24px;
}

.toggle .on {
  background: #2e2e2e;
}

.swatches-box {
  display: flex;
  justify-content: space-between;
  height: 195px;
  margin-top: 5px;
  border: 1px solid #606060;
}

.swatches-scroll {
  display: flex;
  flex-direction: column;
  justify-content: space-between;
  padding: 1px 2px;
  color: #6a6a6a;
}

.up {
  transform: scaleY(-1);
}

.swatch-row {
  display: flex;
  align-items: center;
  gap: 1px;
  height: 14px;
}

.set {
  height: 16px;
}

.folder {
  margin: 0 1px;
  color: #b0b0b0;
}

.sw {
  width: 13px;
  height: 13px;
}

.sw-none {
  border: 1px solid #fff;
  outline: 1px solid #000;
  outline-offset: -2px;
  background: linear-gradient(135deg, #fff 42%, #f00 42% 58%, #fff 58%);
}

.sw-reg {
  background: linear-gradient(#777, #777) center / 13px 1px no-repeat, linear-gradient(#777, #777) center / 1px 13px no-repeat, radial-gradient(circle, #ddd 2px, #777 3px, #ddd 4px, #777 5px, #ddd 6px);
}

.sw-fade {
  background: linear-gradient(90deg, #fff, #334);
}

.sw-sun {
  background: linear-gradient(90deg, #ffe600, #f07030);
}

.sw-sky {
  background: linear-gradient(90deg, #3a86c8, transparent), repeating-conic-gradient(#fff 0 25%, #bbb 0 50%) 0 0 / 4px 4px;
}

.sw-ring {
  background: radial-gradient(circle, #e8e8e8 4px, #111 6px);
}

.sw-leaf {
  background: radial-gradient(circle, #f39800 1px, #7ab51d 3px 4px, transparent 5px), conic-gradient(#ffe94a 12%, #7ab51d 0 25%, #ffe94a 0 37%, #7ab51d 0 50%, #ffe94a 0 62%, #7ab51d 0 75%, #ffe94a 0 87%, #7ab51d 0);
}

.sw-noise {
  background: repeating-linear-gradient(60deg, #a9805d 0 2px, #d9c2aa 2px 3px, #8a6344 3px 5px);
}

.spot {
  background-image: linear-gradient(135deg, transparent 66%, #000 66% 70%, #fff 70%);
}

.swatches-tools {
  display: flex;
  align-items: center;
  gap: 13px;
  height: 14px;
  padding-left: 5px;
}

.gap {
  margin-left: 13px;
}

/* libraries */
.lib-top {
  padding: 6px 9px 5px 8px;
  border-bottom: 1px solid #464646;
}

.lib-search {
  display: flex;
  align-items: center;
  gap: 5px;
  height: 22px;
  padding-right: 2px;
  border-bottom: 1px solid #626262;
}

.lib-search input {
  flex: 1;
  min-width: 0;
}

.lib-search input::placeholder {
  color: #757575;
  font-style: italic;
}

.lib-select {
  display: flex;
  align-items: center;
  height: 19px;
  margin: 8px 0;
  padding-right: 4px;
  border: 1px solid #626262;
  border-radius: 3px;
  background: #4e4e4e;
}

.lib-select select {
  flex: 1;
  appearance: none;
}

.lib-view {
  display: flex;
  align-items: center;
  height: 18px;
  padding-right: 4px;
}

.by-type {
  display: flex;
  align-items: center;
  gap: 4px;
  margin-right: auto;
  color: #fff;
}

.grid-btn {
  padding: 2px;
  margin-right: 6px;
  background: #333;
  border: 1px solid #777;
  border-radius: 2px;
}

.lib-empty {
  display: flex;
  flex: 1;
  flex-direction: column;
  align-items: center;
  padding-top: 43px;
  background: #4b4b4b;
  color: #ababab;
  font-size: 10px;
  line-height: 15px;
  text-align: center;
}

.lib-empty svg {
  margin-bottom: 5px;
  color: #757575;
}

.lib-foot {
  display: flex;
  align-items: center;
  justify-content: flex-end;
  gap: 10px;
  height: 24px;
  padding-right: 21px;
  border-top: 1px solid #464646;
  font-size: 10px;
}

.taskbar {
  height: 2px;
  flex: none;
  background: #7fa3b8;
  border-top: 1px solid #262b33;
}

/* floating panels */
.float {
  position: absolute;
  background: #535353;
  border: 1px solid #3a3a3a;
  border-radius: 4px 4px 0 0;
  box-shadow: 0 0 3px rgba(0, 0, 0, 0.5);
}

.float-head {
  display: flex;
  align-items: center;
  justify-content: flex-end;
  gap: 9px;
  height: 12px;
  padding-right: 5px;
  background: #424242;
  border-bottom: 1px solid #3a3a3a;
  color: #bbb;
}

.float .grip {
  margin: 3px auto;
}

.float-trace {
  left: 50px;
  top: 68px;
  width: 131px;
}

.float-gradient {
  top: 88px;
  right: 286px;
  width: 39px;
  padding-bottom: 2px;
}

.float-brush {
  top: 227px;
  right: 327px;
  width: 39px;
  padding-bottom: 3px;
}

.float-path {
  left: 61px;
  bottom: 77px;
  width: 39px;
  padding-bottom: 3px;
}

.trace {
  display: flex;
  align-items: center;
  gap: 9px;
  height: 30px;
  padding: 0 0 5px 9px;
  font-size: 10px;
}

.trace b {
  font-weight: 600;
}

/* drop-down menus */
.dropdown {
  position: absolute;
  padding: 2px;
  background: #f0f0f0;
  border: 1px solid #979797;
  box-shadow: 2px 2px 2px rgba(0, 0, 0, 0.5);
  color: #000;
}

.effects {
  left: 359px;
  top: 23px;
  width: 310px;
}

.effects li {
  position: relative;
  height: 16px;
  padding-left: 29px;
  margin-right: 2px;
}

.effects .top {
  display: flex;
  justify-content: space-between;
  height: 19px;
  padding: 0 20px 0 19px;
  line-height: 18px;
}

.effects .head {
  height: 20px;
  padding-left: 19px;
  line-height: 20px;
}

.effects .off {
  color: #a0a0a0;
  text-shadow: 1px 1px 0 #fff;
}

.effects .rule {
  height: 2px;
  margin: 3px 0;
  background: #fff;
  border-top: 1px solid #a0a0a0;
}

.sub::after {
  content: "";
  position: absolute;
  right: 4px;
  top: 4px;
  border: solid transparent;
  border-width: 4px 0 4px 5px;
  border-left-color: currentColor;
}

.effects .hot {
  background: #3399ff;
  color: #fff;
}

.hot::before {
  content: "";
  position: absolute;
  inset: -7px -1px -4px 0;
  border: 3px solid #f00;
}

.distort {
  left: 663px;
  top: 181px;
  width: 196px;
}

.distort li {
  position: relative;
  height: 22px;
  padding-left: 32px;
  line-height: 22px;
}

.distort .marked::after {
  inset: -2px -3px -1px 0;
}
```
